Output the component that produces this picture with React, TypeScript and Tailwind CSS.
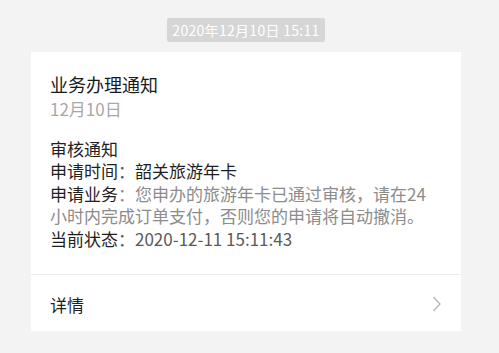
export default function App() {
  const font = { fontFamily: '"Noto Sans CJK SC", "Noto Sans", sans-serif' };
  return (
    <div className="w-[499px] h-[353px] bg-[#f3f3f3] overflow-hidden" style={font}>
      <div className="ml-[31px] w-[430px] flex flex-col">
        <div className="self-center mt-[18px] h-[24px] px-[5px] bg-[#d6d6d6] text-white text-[14px] tracking-[0.3px] leading-[24px] rounded-[2px]">
          2020年12月10日 15:11
        </div>
        <div className="mt-[10px] bg-white">
          <div className="px-[19px] pt-[20px] pb-[24px] border-b border-[#ececec]">
            <div className="text-[18px] leading-[24px] text-[#1a1a1a]">业务办理通知</div>
            <div className="text-[17px] leading-[26px] text-[#a8a8a8]">12月10日</div>
            <div className="mt-[16px] text-[17px] leading-[22.4px] whitespace-nowrap">
              <div className="text-[#1f1f1f]">审核通知</div>
              <div className="text-[#1f1f1f]">
                申请时间<span className="text-[#555]">：</span>韶关旅游年卡
              </div>
              <div>
                <span className="text-[#1f1f1f]">申请业务</span>
                <span className="text-[#8c8c8c]">
                  ：您申办的旅游年卡已通过审核，请在24
                  <br />
                  小时内完成订单支付，否则您的申请将自动撤消。
                </span>
              </div>
              <div>
                <span className="text-[#1f1f1f]">当前状态</span>
                <span className="text-[#5a5a5a]">：2020-12-11 15:11:43</span>
              </div>
            </div>
          </div>
          <div className="h-[56px] px-[19px] flex items-center justify-between">
            <div className="text-[17px] leading-[24px] text-[#1f1f1f] mt-[3px]">详情</div>
            <svg width="10" height="16" viewBox="0 0 10 16" className="mt-[2px]">
              <path d="M1.5 1 L8 8 L1.5 15" fill="none" stroke="#b5b5b5" strokeWidth="1.3" />
            </svg>
          </div>
        </div>
      </div>
    </div>
  );
}
